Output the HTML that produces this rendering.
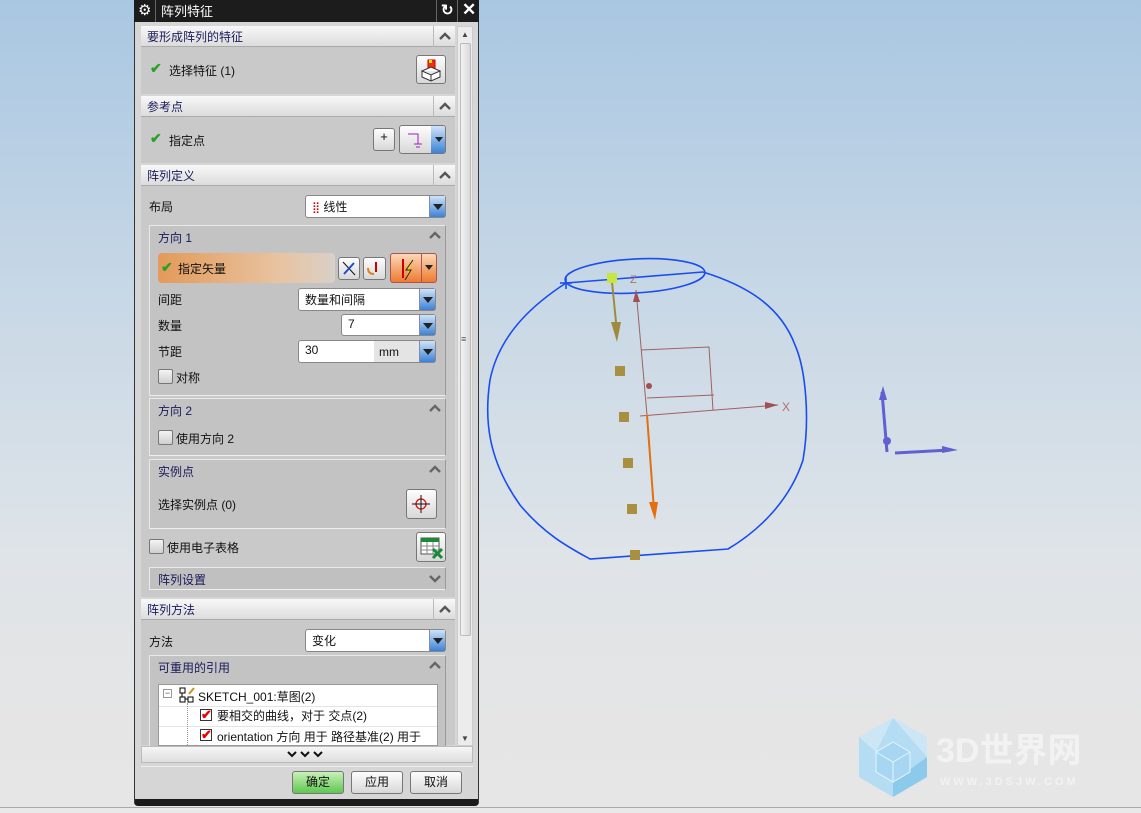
<!DOCTYPE html>
<html><head><meta charset="utf-8"><style>
*{margin:0;padding:0;box-sizing:border-box}
body{width:1141px;height:813px;overflow:hidden;position:relative;font-family:"Liberation Sans","Noto Sans CJK SC",sans-serif;font-size:12px;color:#111;
background:linear-gradient(180deg,#a9c7e2 0px,#c8d8e6 300px,#dfe4e8 560px,#e5e5e5 720px,#e6e6e6 813px)}
.a{position:absolute}
.hdr{position:absolute;left:141px;width:314px;height:21px;background:linear-gradient(#f8f8f8,#dcdcdc);border-bottom:1px solid #aaa;color:#1a1a5a;padding:2px 6px}
.hdr .c{position:absolute;right:0;top:0;width:22px;height:21px;border-left:1px solid #bbb}
.box{position:absolute;left:141px;width:314px;background:#c9c9c9}
.grp{position:absolute;left:149px;width:297px;background:#c3c3c3;border:1px solid #e8e8e8;border-right-color:#999;border-bottom-color:#eee}
.gt{position:absolute;left:8px;top:3px;color:#1a1a5a}
.caret{position:absolute;right:4px;top:5px}
.hdr .c svg{position:absolute;left:5px;top:6px}
.dd{position:absolute;background:#fff;border:1px solid #888;border-radius:3px;height:23px;padding:3px 6px}
.dd .ar{position:absolute;right:0;top:0;bottom:0;width:16px;background:linear-gradient(#cfe3f8,#3b82d8);border-left:1px solid #88a}
.dd .ar:after{content:"";position:absolute;left:3px;top:8px;border:5px solid transparent;border-top:6px solid #222}
.btn{position:absolute;border:1px solid #777;border-radius:3px;background:linear-gradient(#fdfdfd,#d8d8d8)}
.cb{position:absolute;width:15px;height:15px;border:1px solid #777;border-radius:2px;background:linear-gradient(#f4f4f4,#cfcfcf)}
.ck{color:#2aa02a;font-weight:bold;font-size:14px}
</style></head><body>
<svg class="a" style="left:0;top:0" width="1141" height="813">
<g fill="none" stroke="#1a4df0" stroke-width="1.6">
<path d="M566,283 C540,300 500,330 490,380 C484,420 488,460 520,505 C545,535 570,548 590,559 L728,549 C760,530 790,500 803,460 C810,420 806,370 795,345 C780,305 745,285 703,272"/>
<ellipse cx="635" cy="276" rx="70" ry="17" transform="rotate(-3 635 276)"/>
<line x1="566" y1="283" x2="703" y2="272"/>
<line x1="560" y1="283" x2="572" y2="283"/><line x1="566" y1="277" x2="566" y2="289"/>
</g>
<g stroke="#a06060" fill="none" stroke-width="1">
<line x1="636" y1="290" x2="647" y2="415"/>
<polyline points="641,350 709,347 713,410"/>
<polyline points="647,398 714,395"/>
<line x1="640" y1="416" x2="778" y2="405"/>
<text x="782" y="411" fill="#b07070" stroke="none" font-size="12">X</text>
<text x="630" y="283" fill="#b07070" stroke="none" font-size="11">Z</text>
</g>
<circle cx="649" cy="386" r="3" fill="#a05050"/>
<polygon points="636,290 633,302 640,302" fill="#a05050"/>
<polygon points="778,405 765,402 765,409" fill="#a05050"/>
<line x1="647" y1="415" x2="654" y2="510" stroke="#e07010" stroke-width="2"/>
<polygon points="649,502 658,502 655,520" fill="#e07010"/>
<line x1="612" y1="282" x2="616" y2="322" stroke="#a08a40" stroke-width="2"/>
<polygon points="611,322 621,322 617,342" fill="#a08a40"/>
<rect x="607" y="273" width="10" height="10" fill="#c8e640"/>
<g fill="#a89040"><rect x="615" y="366" width="10" height="10"/><rect x="619" y="412" width="10" height="10"/><rect x="623" y="458" width="10" height="10"/><rect x="627" y="504" width="10" height="10"/><rect x="630" y="550" width="10" height="10"/></g>
<line x1="882" y1="392" x2="887" y2="452" stroke="#6060d0" stroke-width="3"/>
<polygon points="879,400 883,386 887,400" fill="#6060d0"/>
<circle cx="887" cy="441" r="4" fill="#6060d0"/>
<line x1="895" y1="453" x2="950" y2="450" stroke="#6060d0" stroke-width="3"/>
<polygon points="942,446 958,450 942,453" fill="#6060d0"/>
<polygon points="893,718 927,737 927,777 893,797 859,777 859,737" fill="#b4dcf2"/>
<path d="M893,718 L927,737 L927,757 Z M859,737 L893,718 L876,752Z" fill="#cce6f6"/>
<path d="M927,757 L927,777 L893,797 L893,782Z" fill="#8ccaec"/>
<polygon points="893,742 910,752 910,772 893,782 876,772 876,752" fill="#a6d6f2" stroke="#e8f4fb"/>
<path d="M876,752 L893,762 L910,752 M893,762 V782" stroke="#e8f4fb" fill="none"/>
<text x="936" y="762" font-family="Liberation Sans,Noto Sans CJK SC,sans-serif" font-size="34" font-weight="bold" fill="#f2f2f2">3D世界网</text>
<text x="940" y="785" font-family="Liberation Sans,sans-serif" font-size="11" letter-spacing="3" font-weight="bold" fill="#f2f2f2">WWW.3DSJW.COM</text>
<line x1="0" y1="807.5" x2="1141" y2="807.5" stroke="#aaa"/>
</svg>
<div class="a" style="left:0;top:808px;width:1141px;height:5px;background:#e9e9e9"></div>

<div class="a" style="left:134px;top:0;width:345px;height:806px;background:#d6d6d6;border:1px solid #333;border-bottom:7px solid #1a1a1a;border-radius:0 0 4px 4px"></div>
<div class="a" style="left:134px;top:0;width:345px;height:22px;background:#1c1c1c;color:#fff;font-size:13px">
 <span class="a" style="left:4px;top:1px;font-size:15px">⚙</span>
 <span class="a" style="left:21px;top:0;width:1px;height:22px;background:#666"></span>
 <span class="a" style="left:27px;top:1px">阵列特征</span>
 <span class="a" style="left:302px;top:0;width:1px;height:22px;background:#666"></span>
 <span class="a" style="left:307px;top:1px;font-size:15px;font-weight:bold">↻</span>
 <span class="a" style="left:323px;top:0;width:1px;height:22px;background:#666"></span>
 <span class="a" style="left:328px;top:0;font-size:17px;font-weight:bold">✕</span>
</div>
<div class="a" style="left:457px;top:26px;width:16px;height:720px;background:#ececec;border:1px solid #ccc"></div>
<div class="a" style="left:460px;top:43px;width:11px;height:593px;background:linear-gradient(90deg,#f4f4f4,#d8d8d8);border:1px solid #bbb;border-radius:2px"></div>
<div class="a" style="left:461px;top:30px;font-size:8px;color:#444">▲</div>
<div class="a" style="left:461px;top:734px;font-size:8px;color:#444">▼</div>
<div class="a" style="left:461px;top:334px;font-size:9px;color:#555">≡</div>

<div class="hdr" style="top:26px">要形成阵列的特征<span class="c"><svg width="12" height="8"><path d="M1,7 L6,2 L11,7" stroke="#555" stroke-width="2.4" fill="none"/></svg></span></div>
<div class="box" style="top:47px;height:47px"><span class="a ck" style="left:9px;top:13px">✔</span><span class="a" style="left:28px;top:15px">选择特征 (1)</span></div>
<div class="btn" style="left:416px;top:55px;width:30px;height:29px"><svg width="28" height="27"><rect x="11" y="4" width="7" height="9" fill="#f03010" stroke="#c00"/><rect x="12" y="4" width="3" height="3" fill="#fd0"/><path d="M5,15 L14,11 L23,15 L14,19Z M5,15 V21 L14,25 L23,21 V15 M14,19 V25" fill="#fff" stroke="#333"/></svg></div>

<div class="hdr" style="top:96px">参考点<span class="c"><svg width="12" height="8"><path d="M1,7 L6,2 L11,7" stroke="#555" stroke-width="2.4" fill="none"/></svg></span></div>
<div class="box" style="top:117px;height:46px"><span class="a ck" style="left:9px;top:13px">✔</span><span class="a" style="left:28px;top:15px">指定点</span></div>
<div class="btn" style="left:373px;top:128px;width:22px;height:23px;font-size:13px;text-align:center;line-height:16px">+</div>
<div class="btn" style="left:399px;top:125px;width:47px;height:29px;overflow:hidden"><svg width="32" height="27"><path d="M8,8 H18 V18 M14,18 H22 M16,21 H20" stroke="#a020c0" fill="none"/></svg><div class="a" style="right:0;top:0;width:14px;height:27px;background:linear-gradient(#cfe3f8,#3b82d8)"></div><span class="a" style="right:2px;top:11px;border:4px solid transparent;border-top:5px solid #222"></span></div>

<div class="hdr" style="top:165px">阵列定义<span class="c"><svg width="12" height="8"><path d="M1,7 L6,2 L11,7" stroke="#555" stroke-width="2.4" fill="none"/></svg></span></div>
<div class="box" style="top:186px;height:411px"></div>
<span class="a" style="left:149px;top:198px">布局</span>
<div class="dd" style="left:305px;top:195px;width:141px;padding-top:2px"><span style="color:#c00;font-size:11px">⣿</span> 线性<span class="ar"></span></div>

<div class="grp" style="top:225px;height:171px"><span class="gt">方向 1</span><svg class="caret" width="12" height="8"><path d="M1,7 L6,2 L11,7" stroke="#666" stroke-width="2.4" fill="none"/></svg></div>
<div class="a" style="left:158px;top:253px;width:177px;height:30px;border-radius:4px;background:linear-gradient(90deg,#e39a5a,#e8c4a2 70%,#d8d0c8)"><span class="a ck" style="left:3px;top:6px">✔</span><span class="a" style="left:20px;top:7px">指定矢量</span></div>
<div class="btn" style="left:338px;top:257px;width:22px;height:23px"><svg width="20" height="21"><line x1="4" y1="4" x2="16" y2="17" stroke="#111"/><line x1="5" y1="16" x2="15" y2="5" stroke="#1a4dd0" stroke-width="2"/></svg></div>
<div class="btn" style="left:363px;top:257px;width:23px;height:23px"><svg width="21" height="21"><line x1="12" y1="4" x2="12" y2="14" stroke="#c00" stroke-width="2"/><path d="M4,10 q0,6 6,6" stroke="#e08020" fill="none" stroke-width="2"/></svg></div>
<div class="a" style="left:390px;top:253px;width:47px;height:30px;border:1px solid #a55;border-radius:3px;background:linear-gradient(#fbd8b8,#f07a30)"><svg width="30" height="28"><line x1="12" y1="5" x2="12" y2="24" stroke="#c00" stroke-width="2"/><path d="M22,6 L15,16 H20 L14,26" stroke="#222" fill="#fd0"/></svg><span class="a" style="left:30px;top:0;width:1px;height:28px;background:#a55"></span><span class="a" style="left:34px;top:11px;border:4px solid transparent;border-top:5px solid #222"></span></div>

<span class="a" style="left:158px;top:291px">间距</span>
<div class="dd" style="left:298px;top:288px;width:138px;padding-top:2px">数量和间隔<span class="ar"></span></div>
<span class="a" style="left:158px;top:317px">数量</span>
<div class="dd" style="left:341px;top:314px;width:95px;height:22px;padding-top:2px">7<span class="ar"></span></div>
<span class="a" style="left:158px;top:343px">节距</span>
<div class="dd" style="left:298px;top:340px;width:138px;height:23px;padding-top:2px;background:linear-gradient(90deg,#fff 55%,#e4e4e4 55%)">30<span class="a" style="left:80px;top:4px">mm</span><span class="ar"></span></div>
<div class="cb" style="left:158px;top:369px"></div><span class="a" style="left:176px;top:369px">对称</span>

<div class="grp" style="top:398px;height:58px"><span class="gt">方向 2</span><svg class="caret" width="12" height="8"><path d="M1,7 L6,2 L11,7" stroke="#666" stroke-width="2.4" fill="none"/></svg><div class="cb" style="left:8px;top:31px"></div><span class="a" style="left:26px;top:31px">使用方向 2</span></div>
<div class="grp" style="top:459px;height:70px"><span class="gt">实例点</span><svg class="caret" width="12" height="8"><path d="M1,7 L6,2 L11,7" stroke="#666" stroke-width="2.4" fill="none"/></svg><span class="a" style="left:8px;top:36px">选择实例点 (0)</span></div>
<div class="btn" style="left:406px;top:489px;width:31px;height:30px"><svg width="29" height="28"><circle cx="14" cy="14" r="5" stroke="#e01010" fill="none" stroke-width="1.3"/><path d="M14,5 V23 M5,14 H23" stroke="#111"/></svg></div>

<div class="cb" style="left:149px;top:539px"></div><span class="a" style="left:167px;top:539px">使用电子表格</span>
<div class="btn" style="left:416px;top:532px;width:30px;height:30px"><svg width="28" height="28"><rect x="4" y="5" width="18" height="16" fill="#fff" stroke="#555"/><rect x="4" y="5" width="18" height="4" fill="#1a8a3a"/><path d="M4,13H22M4,17H22M10,9V21M16,9V21" stroke="#888"/><path d="M16,16 L25,25 M25,16 L16,25" stroke="#1a8a3a" stroke-width="3"/></svg></div>
<div class="grp" style="top:567px;height:23px;background:#c0c0c0"><span class="gt" style="top:3px">阵列设置</span><svg class="caret" style="top:7px" width="12" height="8"><path d="M1,1 L6,6 L11,1" stroke="#666" stroke-width="2.4" fill="none"/></svg></div>

<div class="hdr" style="top:599px">阵列方法<span class="c"><svg width="12" height="8"><path d="M1,7 L6,2 L11,7" stroke="#555" stroke-width="2.4" fill="none"/></svg></span></div>
<div class="box" style="top:620px;height:125px"></div>
<span class="a" style="left:149px;top:633px">方法</span>
<div class="dd" style="left:305px;top:629px;width:141px;padding-top:2px">变化<span class="ar"></span></div>
<div class="grp" style="top:655px;height:95px"><span class="gt">可重用的引用</span><svg class="caret" width="12" height="8"><path d="M1,7 L6,2 L11,7" stroke="#666" stroke-width="2.4" fill="none"/></svg></div>
<div class="a" style="left:158px;top:684px;width:280px;height:62px;background:#fff;border:1px solid #999;overflow:hidden">
 <div class="a" style="left:4px;top:4px;width:9px;height:9px;border:1px solid #999;font-size:9px;line-height:7px;text-align:center;color:#555">−</div>
 <svg class="a" style="left:20px;top:2px" width="16" height="16"><rect x="1" y="1" width="5" height="5" fill="none" stroke="#000"/><rect x="1" y="10" width="5" height="5" fill="none" stroke="#000"/><rect x="9" y="10" width="5" height="5" fill="none" stroke="#000"/><path d="M3,6V10M6,12H9" stroke="#000"/><path d="M10,7 L15,1" stroke="#d09020" stroke-width="2"/></svg>
 <span class="a" style="left:39px;top:3px">SKETCH_001:草图(2)</span>
 <div class="a" style="left:0;top:21px;width:280px;border-top:1px solid #e4e4e4"></div>
 <div class="a" style="left:0;top:41px;width:280px;border-top:1px solid #e4e4e4"></div>
 <div class="a" style="left:28px;top:18px;width:1px;height:42px;border-left:1px dotted #999"></div>
 <span class="a" style="left:41px;top:24px;width:12px;height:12px;border:1px solid #333;color:#e00;font-size:13px;line-height:10px;font-weight:bold">✔</span>
 <span class="a" style="left:58px;top:22px">要相交的曲线，对于 交点(2)</span>
 <span class="a" style="left:41px;top:44px;width:12px;height:12px;border:1px solid #333;color:#e00;font-size:13px;line-height:10px;font-weight:bold">✔</span>
 <span class="a" style="left:58px;top:43px;white-space:nowrap">orientation 方向 用于 路径基准(2) 用于</span>
</div>
<div class="a" style="left:141px;top:746px;width:332px;height:17px;background:linear-gradient(#f6f6f6,#dedede);border:1px solid #bbb"><svg class="a" style="left:145px;top:4px" width="40" height="8"><path d="M1,1 L5,5 L9,1 M14,1 L18,5 L22,1 M27,1 L31,5 L35,1" stroke="#111" stroke-width="2" fill="none"/></svg></div>
<div class="a" style="left:141px;top:766px;width:332px;border-top:1px solid #eee"></div>
<div class="btn" style="left:292px;top:771px;width:52px;height:23px;background:linear-gradient(#c8f0b8,#5ec850);text-align:center;line-height:21px">确定</div>
<div class="btn" style="left:351px;top:771px;width:52px;height:23px;text-align:center;line-height:21px">应用</div>
<div class="btn" style="left:410px;top:771px;width:52px;height:23px;text-align:center;line-height:21px">取消</div>
</body></html>
